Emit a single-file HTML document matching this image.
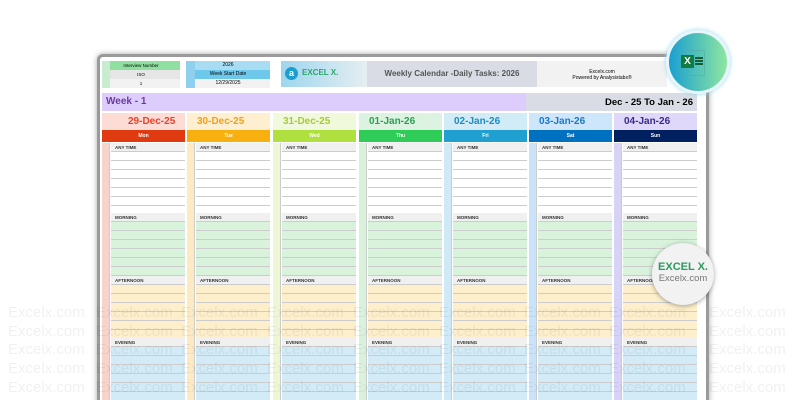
<!DOCTYPE html><html style="width:800px;height:400px;overflow:hidden"><head><style>
*{margin:0;padding:0;box-sizing:border-box}
body{width:800px;height:400px;overflow:hidden;background:#fff;font-family:"Liberation Sans",sans-serif;position:relative}
.a{position:absolute}
.frame{left:97px;top:54px;width:612px;height:352px;border:3px solid #9a9a9a;border-bottom:none;border-radius:6px 6px 0 0;background:#fff;box-shadow:0 0 6px rgba(0,0,0,.35)}
.col{position:absolute;top:113px;width:83px;height:287px}
.dt{height:17px;font-size:10px;font-weight:bold;line-height:17px;padding-left:10px}
.day{height:12px;font-size:5px;color:#fff;text-align:center;line-height:12px;font-weight:bold}
.sec{position:absolute;left:0;width:83px}
.strip{position:absolute;left:0;top:0;bottom:0;width:8px;border-right:1px solid #ccc}
.hd{position:absolute;left:9px;right:0;top:0;height:9px;background:#f0f0f0;font-size:4.5px;font-weight:bold;line-height:9px;padding-left:4px;color:#333;border-bottom:1px solid #ccc}
.rows{position:absolute;left:9px;right:0;top:9px;bottom:0;background-image:repeating-linear-gradient(to bottom,transparent 0,transparent 8px,#ccc 8px,#ccc 9px)}
.wm{position:absolute;font-size:15px;color:#000;opacity:.055;white-space:nowrap}
</style></head><body>
<div class="a frame"></div>
<div class="a" style="left:102px;top:61px;width:78px;height:27px;font-size:4.5px;text-align:center">
<div style="height:9px;background:#8fe0a0;line-height:9px">Interview Number</div>
<div style="height:9px;background:#e6e6e6;line-height:9px">ISO</div>
<div style="height:9px;background:#f2f2f2;line-height:9px">1</div></div>
<div class="a" style="left:102px;top:61px;width:8px;height:27px;background:#c8ecd0"></div>
<div class="a" style="left:186px;top:61px;width:84px;height:27px;font-size:5px;text-align:center">
<div style="height:9px;background:#a8dcf2;line-height:9px">2026</div>
<div style="height:9px;background:#6ec8ec;line-height:9px">Week Start Date</div>
<div style="height:9px;background:#f2f2f2;line-height:9px">12/29/2025</div></div>
<div class="a" style="left:186px;top:61px;width:9px;height:27px;background:#8fd0ee"></div>
<div class="a" style="left:281px;top:61px;width:86px;height:26px;background:linear-gradient(90deg,#9dd6ee,#e6eef2)"></div>
<div class="a" style="left:285px;top:67px;width:13px;height:13px;border-radius:50%;background:#1a9fd0;color:#fff;font-size:9px;font-weight:bold;text-align:center;line-height:13px">a</div>
<div class="a" style="left:302px;top:68px;font-size:8px;font-weight:bold;color:#2aa66a">EXCEL X.</div>
<div class="a" style="left:367px;top:61px;width:170px;height:26px;background:#d9dce4;font-size:8px;font-weight:bold;color:#555;line-height:26px;text-align:center">Weekly Calendar -Daily Tasks: 2026</div>
<div class="a" style="left:537px;top:61px;width:130px;height:26px;background:#f2f2f2;font-size:5px;text-align:center;padding-top:8px;line-height:6px">Excelx.com<br>Powered by Analysistabs®</div>
<div class="a" style="left:102px;top:93px;width:424px;height:18px;background:#dccdfc;font-size:10px;font-weight:bold;color:#6a3aa0;line-height:18px;padding-left:4px">Week - 1</div>
<div class="a" style="left:526px;top:93px;width:171px;height:18px;background:#d9dce4;font-size:9.5px;font-weight:bold;line-height:20px;text-align:right;padding-right:4px">Dec - 25 To Jan - 26</div>

<div class="col" style="left:102px"><div class="dt" style="background:#fcdcd5;color:#e8402a;padding-left:26px">29-Dec-25</div><div class="day" style="background:#e03a10">Mon</div>
<div class="sec" style="top:30px;height:70px"><div class="strip" style="background:#f8d3cc"></div><div class="hd">ANY TIME</div><div class="rows"></div></div>
<div class="sec" style="top:100px;height:63px"><div class="strip" style="background:#f8d3cc"></div><div class="hd">MORNING</div><div class="rows" style="background-color:#d8f2dc"></div></div>
<div class="sec" style="top:163px;height:62px"><div class="strip" style="background:#f8d3cc"></div><div class="hd">AFTERNOON</div><div class="rows" style="background-color:#fdefcc"></div></div>
<div class="sec" style="top:225px;height:65px"><div class="strip" style="background:#f8d3cc"></div><div class="hd">EVENING</div><div class="rows" style="background-color:#d2ebf7"></div></div></div>

<div class="col" style="left:187px"><div class="dt" style="background:#fdefd0;color:#f0a020">30-Dec-25</div><div class="day" style="background:#f8b010">Tue</div>
<div class="sec" style="top:30px;height:70px"><div class="strip" style="background:#fde9c2"></div><div class="hd">ANY TIME</div><div class="rows"></div></div>
<div class="sec" style="top:100px;height:63px"><div class="strip" style="background:#fde9c2"></div><div class="hd">MORNING</div><div class="rows" style="background-color:#d8f2dc"></div></div>
<div class="sec" style="top:163px;height:62px"><div class="strip" style="background:#fde9c2"></div><div class="hd">AFTERNOON</div><div class="rows" style="background-color:#fdefcc"></div></div>
<div class="sec" style="top:225px;height:65px"><div class="strip" style="background:#fde9c2"></div><div class="hd">EVENING</div><div class="rows" style="background-color:#d2ebf7"></div></div></div>

<div class="col" style="left:273px"><div class="dt" style="background:#f1f9dc;color:#a8c83a">31-Dec-25</div><div class="day" style="background:#b0e040">Wed</div>
<div class="sec" style="top:30px;height:70px"><div class="strip" style="background:#eef7d4"></div><div class="hd">ANY TIME</div><div class="rows"></div></div>
<div class="sec" style="top:100px;height:63px"><div class="strip" style="background:#eef7d4"></div><div class="hd">MORNING</div><div class="rows" style="background-color:#d8f2dc"></div></div>
<div class="sec" style="top:163px;height:62px"><div class="strip" style="background:#eef7d4"></div><div class="hd">AFTERNOON</div><div class="rows" style="background-color:#fdefcc"></div></div>
<div class="sec" style="top:225px;height:65px"><div class="strip" style="background:#eef7d4"></div><div class="hd">EVENING</div><div class="rows" style="background-color:#d2ebf7"></div></div></div>

<div class="col" style="left:359px"><div class="dt" style="background:#dcf3e1;color:#28a050">01-Jan-26</div><div class="day" style="background:#30cc58">Thu</div>
<div class="sec" style="top:30px;height:70px"><div class="strip" style="background:#d8f2dc"></div><div class="hd">ANY TIME</div><div class="rows"></div></div>
<div class="sec" style="top:100px;height:63px"><div class="strip" style="background:#d8f2dc"></div><div class="hd">MORNING</div><div class="rows" style="background-color:#d8f2dc"></div></div>
<div class="sec" style="top:163px;height:62px"><div class="strip" style="background:#d8f2dc"></div><div class="hd">AFTERNOON</div><div class="rows" style="background-color:#fdefcc"></div></div>
<div class="sec" style="top:225px;height:65px"><div class="strip" style="background:#d8f2dc"></div><div class="hd">EVENING</div><div class="rows" style="background-color:#d2ebf7"></div></div></div>

<div class="col" style="left:444px"><div class="dt" style="background:#d2ecf7;color:#1e8ac0">02-Jan-26</div><div class="day" style="background:#20a0d0">Fri</div>
<div class="sec" style="top:30px;height:70px"><div class="strip" style="background:#cfe9f6"></div><div class="hd">ANY TIME</div><div class="rows"></div></div>
<div class="sec" style="top:100px;height:63px"><div class="strip" style="background:#cfe9f6"></div><div class="hd">MORNING</div><div class="rows" style="background-color:#d8f2dc"></div></div>
<div class="sec" style="top:163px;height:62px"><div class="strip" style="background:#cfe9f6"></div><div class="hd">AFTERNOON</div><div class="rows" style="background-color:#fdefcc"></div></div>
<div class="sec" style="top:225px;height:65px"><div class="strip" style="background:#cfe9f6"></div><div class="hd">EVENING</div><div class="rows" style="background-color:#d2ebf7"></div></div></div>

<div class="col" style="left:529px"><div class="dt" style="background:#cde6fb;color:#1a78c8">03-Jan-26</div><div class="day" style="background:#0070c0">Sat</div>
<div class="sec" style="top:30px;height:70px"><div class="strip" style="background:#c9e3fb"></div><div class="hd">ANY TIME</div><div class="rows"></div></div>
<div class="sec" style="top:100px;height:63px"><div class="strip" style="background:#c9e3fb"></div><div class="hd">MORNING</div><div class="rows" style="background-color:#d8f2dc"></div></div>
<div class="sec" style="top:163px;height:62px"><div class="strip" style="background:#c9e3fb"></div><div class="hd">AFTERNOON</div><div class="rows" style="background-color:#fdefcc"></div></div>
<div class="sec" style="top:225px;height:65px"><div class="strip" style="background:#c9e3fb"></div><div class="hd">EVENING</div><div class="rows" style="background-color:#d2ebf7"></div></div></div>

<div class="col" style="left:614px"><div class="dt" style="background:#e0d8fb;color:#3a2a8a">04-Jan-26</div><div class="day" style="background:#002060">Sun</div>
<div class="sec" style="top:30px;height:70px"><div class="strip" style="background:#d6d3f7"></div><div class="hd">ANY TIME</div><div class="rows"></div></div>
<div class="sec" style="top:100px;height:63px"><div class="strip" style="background:#d6d3f7"></div><div class="hd">MORNING</div><div class="rows" style="background-color:#d8f2dc"></div></div>
<div class="sec" style="top:163px;height:62px"><div class="strip" style="background:#d6d3f7"></div><div class="hd">AFTERNOON</div><div class="rows" style="background-color:#fdefcc"></div></div>
<div class="sec" style="top:225px;height:65px"><div class="strip" style="background:#d6d3f7"></div><div class="hd">EVENING</div><div class="rows" style="background-color:#d2ebf7"></div></div></div>

<div class="wm" style="left:8px;top:304px;line-height:18.7px">Excelx.com<br>Excelx.com<br>Excelx.com<br>Excelx.com<br>Excelx.com</div>
<div class="wm" style="left:96px;top:304px;line-height:18.7px">Excelx.com<br>Excelx.com<br>Excelx.com<br>Excelx.com<br>Excelx.com</div>
<div class="wm" style="left:181px;top:304px;line-height:18.7px">Excelx.com<br>Excelx.com<br>Excelx.com<br>Excelx.com<br>Excelx.com</div>
<div class="wm" style="left:267px;top:304px;line-height:18.7px">Excelx.com<br>Excelx.com<br>Excelx.com<br>Excelx.com<br>Excelx.com</div>
<div class="wm" style="left:353px;top:304px;line-height:18.7px">Excelx.com<br>Excelx.com<br>Excelx.com<br>Excelx.com<br>Excelx.com</div>
<div class="wm" style="left:439px;top:304px;line-height:18.7px">Excelx.com<br>Excelx.com<br>Excelx.com<br>Excelx.com<br>Excelx.com</div>
<div class="wm" style="left:524px;top:304px;line-height:18.7px">Excelx.com<br>Excelx.com<br>Excelx.com<br>Excelx.com<br>Excelx.com</div>
<div class="wm" style="left:609px;top:304px;line-height:18.7px">Excelx.com<br>Excelx.com<br>Excelx.com<br>Excelx.com<br>Excelx.com</div>
<div class="wm" style="left:709px;top:304px;line-height:18.7px">Excelx.com<br>Excelx.com<br>Excelx.com<br>Excelx.com<br>Excelx.com</div>

<div class="a" style="left:666px;top:30px;width:64px;height:64px;border-radius:50%;background:linear-gradient(90deg,#1a9fd0,#8ee6a0);border:3px solid #e8f6fb;box-shadow:0 0 5px #8fd8ee"></div>
<div class="a" style="left:685px;top:50px;width:20px;height:26px;border:1px solid #5aa;border-radius:2px;opacity:.6"></div>
<div class="a" style="left:681px;top:55px;width:13px;height:13px;background:#107c41;color:#fff;font-size:10px;font-weight:bold;text-align:center;line-height:13px">X</div>
<div class="a" style="left:695px;top:57px;width:8px;height:9px;background:repeating-linear-gradient(#185c37 0 2px,transparent 2px 3px)"></div>
<div class="a" style="left:652px;top:243px;width:62px;height:62px;border-radius:50%;background:#f2f2f2;box-shadow:0 1px 5px rgba(0,0,0,.35);text-align:center;padding-top:18px">
<div style="font-size:11px;font-weight:bold;color:#2a9a60;line-height:12px">EXCEL X.</div>
<div style="font-size:9.5px;color:#777;line-height:12px">Excelx.com</div></div>
</body></html>
